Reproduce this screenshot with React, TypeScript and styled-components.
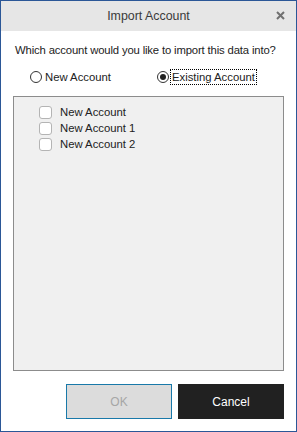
import React, { useState } from "react";
import styled, { createGlobalStyle } from "styled-components";

const ACCOUNTS = ["New Account", "New Account 1", "New Account 2"];

const GlobalStyle = createGlobalStyle`
  html, body {
    margin: 0;
    padding: 0;
    background: #ffffff;
  }
  body {
    font-family: "Liberation Sans", Arial, sans-serif;
  }
`;

function App() {
  const [mode, setMode] = useState<"new" | "existing">("existing");
  const [checked, setChecked] = useState<Record<string, boolean>>({});

  return (
    <>
      <GlobalStyle />
      <Window>
        <TitleBar>
          <Title>Import Account</Title>
          <CloseButton aria-label="Close">
            <svg width="9" height="9" viewBox="0 0 9 9">
              <path d="M1 1 L8 8 M8 1 L1 8" stroke="#707070" strokeWidth="2" />
            </svg>
          </CloseButton>
        </TitleBar>

        <Body>
          <Question>Which account would you like to import this data into?</Question>

          <RadioRow>
            <RadioLabel onClick={() => setMode("new")}>
              <RadioCircle $on={mode === "new"} />
              <RadioText>New Account</RadioText>
            </RadioLabel>
            <RadioLabel onClick={() => setMode("existing")}>
              <RadioCircle $on={mode === "existing"} />
              <RadioText $focus={mode === "existing"}>Existing Account</RadioText>
            </RadioLabel>
          </RadioRow>

          <ListBox>
            {ACCOUNTS.map((name) => (
              <ListItem
                key={name}
                onClick={() => setChecked({ ...checked, [name]: !checked[name] })}
              >
                <CheckBox $on={!!checked[name]} />
                <ItemText>{name}</ItemText>
              </ListItem>
            ))}
          </ListBox>

          <ButtonRow>
            <OkButton disabled>OK</OkButton>
            <CancelButton>Cancel</CancelButton>
          </ButtonRow>
        </Body>
      </Window>
    </>
  );
}

const Window = styled.div`
  width: 297px;
  height: 432px;
  box-sizing: border-box;
  border: 1px solid #2b5797;
  display: flex;
  flex-direction: column;
  background: #ffffff;
`;

const TitleBar = styled.div`
  height: 30px;
  background: #e6e6e6;
  display: flex;
  align-items: center;
  justify-content: center;
  position: relative;
`;

const Title = styled.div`
  font-size: 12.4px;
  color: #3a3a3a;
  margin-top: -1px;
`;

const CloseButton = styled.div`
  position: absolute;
  right: 11px;
  top: 10px;
  width: 9px;
  height: 9px;
  display: flex;
`;

const Body = styled.div`
  flex: 1;
  display: flex;
  flex-direction: column;
  padding: 0 12px 12px 12px;
`;

const Question = styled.div`
  margin-top: 13px;
  font-size: 11.3px;
  letter-spacing: -0.15px;
  color: #222222;
  padding-left: 2px;
  white-space: nowrap;
`;

const RadioRow = styled.div`
  display: flex;
  margin-top: 12px;
  padding-left: 17px;
  height: 18px;
  align-items: center;
`;

const RadioLabel = styled.div`
  display: flex;
  align-items: center;
  width: 127px;
  cursor: default;
`;

const RadioCircle = styled.div<{ $on: boolean }>`
  width: 12px;
  height: 12px;
  box-sizing: border-box;
  border: 1px solid #333333;
  border-radius: 50%;
  background: #ffffff;
  display: flex;
  align-items: center;
  justify-content: center;
  margin-right: 1px;

  &::after {
    content: "";
    display: ${(p) => (p.$on ? "block" : "none")};
    width: 6px;
    height: 6px;
    border-radius: 50%;
    background: #222222;
  }
`;

const RadioText = styled.span<{ $focus?: boolean }>`
  font-size: 11.3px;
  color: #222222;
  padding: 1px 1px;
  border: 1px dotted ${(p) => (p.$focus ? "#000000" : "transparent")};
`;

const ListBox = styled.div`
  margin-top: 10px;
  flex: 1;
  background: #f0f0f0;
  border: 1px solid #8c8c8c;
  padding: 7px 0 0 25px;
  display: flex;
  flex-direction: column;
`;

const ListItem = styled.div`
  display: flex;
  align-items: center;
  height: 16px;
`;

const CheckBox = styled.div<{ $on: boolean }>`
  width: 13px;
  height: 13px;
  box-sizing: border-box;
  border: 1px solid #b4b4b4;
  border-radius: 3px;
  background: ${(p) => (p.$on ? "#333333" : "#ffffff")};
  margin-right: 8px;
`;

const ItemText = styled.span`
  font-size: 11.3px;
  color: #222222;
`;

const ButtonRow = styled.div`
  display: flex;
  justify-content: flex-end;
  gap: 6px;
  margin-top: 13px;
`;

const BaseButton = styled.button`
  width: 106px;
  height: 35px;
  font-family: "Liberation Sans", Arial, sans-serif;
  font-size: 12px;
  box-sizing: border-box;
`;

const OkButton = styled(BaseButton)`
  background: #dcdcdc;
  color: #a6a6a6;
  border: 1px solid #1979a9;
`;

const CancelButton = styled(BaseButton)`
  background: #212121;
  color: #ffffff;
  border: none;
`;

export default App;
